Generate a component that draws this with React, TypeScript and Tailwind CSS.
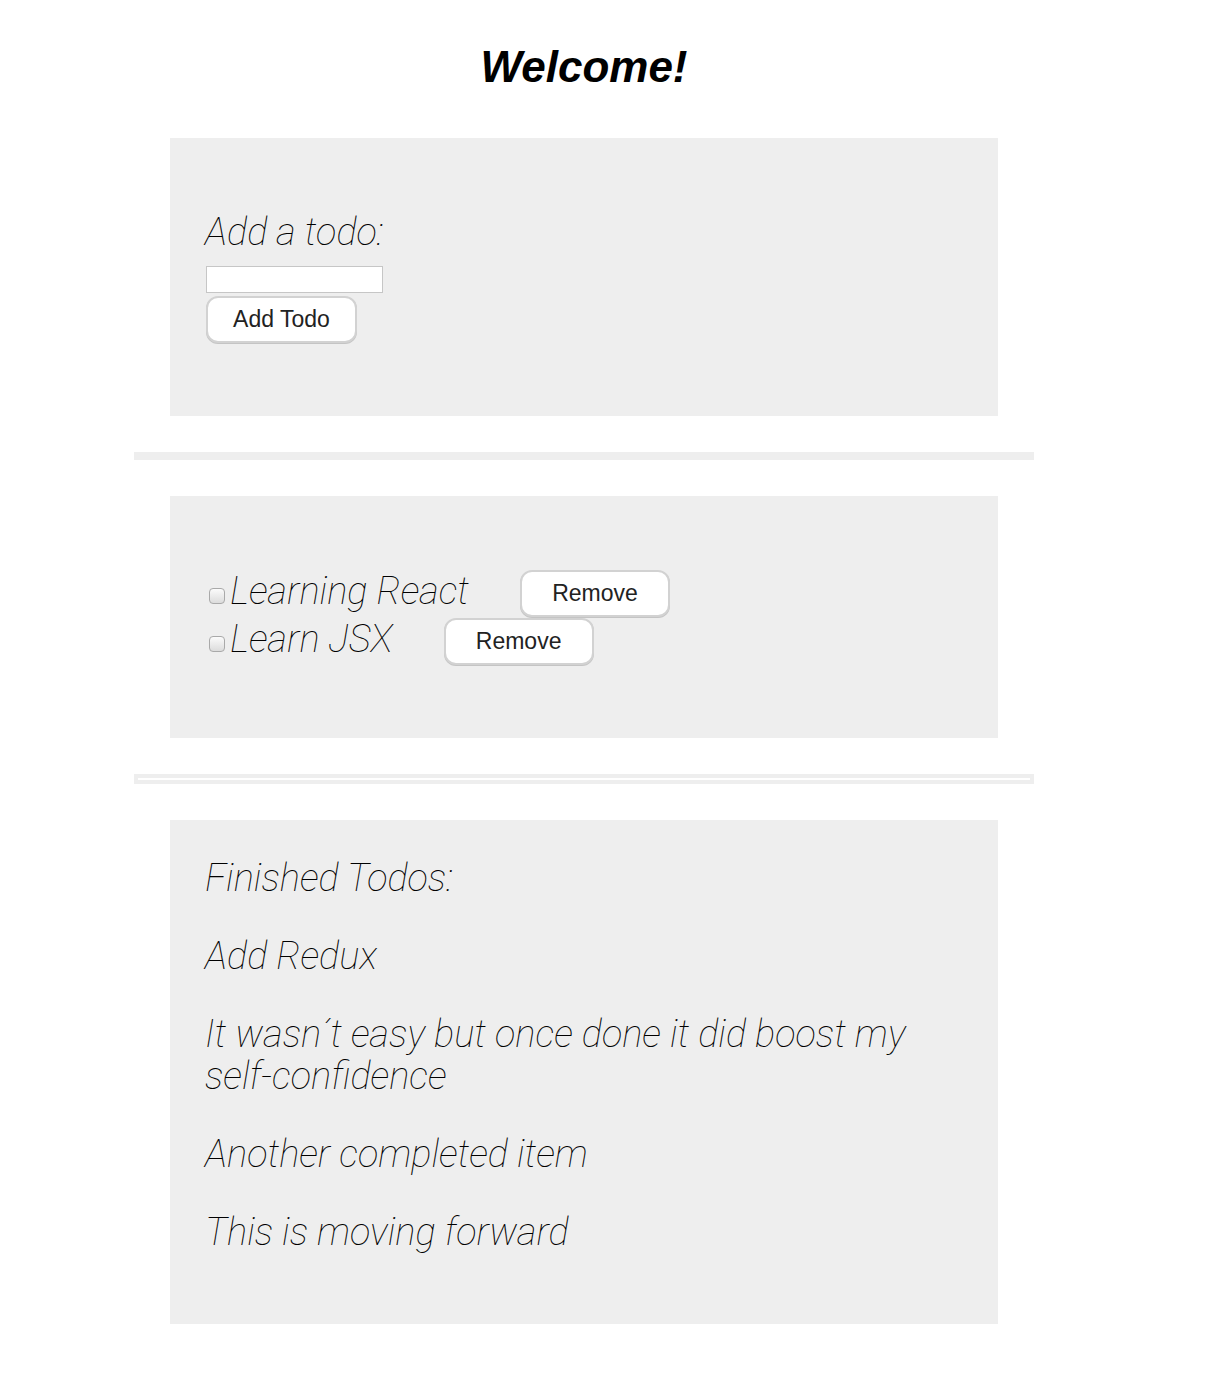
import { FC } from 'react';

const todos = [ 'Learning React', 'Learn JSX' ];

const finished = [
    'Add Redux',
    'It wasn\u00b4t easy but once done it did boost my self-confidence',
    'Another completed item',
    'This is moving forward'
];

const thin = 'font-["Roboto","Helvetica_Neue","Liberation_Sans",sans-serif] font-thin italic text-[38px] leading-[42px] text-black';

const PillButton: FC<{ label: string; className?: string }> = ({ label, className = '' }) =>
{
    return (
        <button className={ `h-[47px] rounded-[12px] border-2 border-[#d2d2d2] bg-white text-[23px] text-[#222] font-["Liberation_Sans",Arial,sans-serif] shadow-[0_1px_0_#c4c4c4] ${ className }` }>
            { label }
        </button>
    );
};

const App: FC<{}> = () =>
{
    return (
        <div className="min-h-[1392px] bg-white pt-[43px]">
            <div className="ml-[134px] w-[900px] flex flex-col">
                <h1 className="h-[48px] leading-[48px] text-center text-[44px] font-bold italic text-black font-['Liberation_Sans',Arial,sans-serif] mb-[47px]">
                    Welcome!
                </h1>

                { /* Add todo form */ }
                <div className="mx-[36px] bg-[#eeeeee] pl-[35px] pt-[73px] pb-[73px] flex flex-col items-start">
                    <p className={ thin }>Add a todo:</p>
                    <input type="text" className="mt-[13px] ml-[1px] w-[177px] h-[27px] bg-white border border-[#c6c6c6] outline-none" />
                    <PillButton label="Add Todo" className="mt-[3px] ml-[1px] w-[151px]" />
                </div>

                <div className="my-[36px] h-[8px] bg-[#eeeeee]" />

                { /* Todo list */ }
                <div className="mx-[36px] bg-[#eeeeee] pl-[39px] pt-[74px] pb-[72px] flex flex-col">
                    { todos.map(todo => (
                        <div key={ todo } className="flex items-end h-[48px]">
                            <input type="checkbox" className="appearance-none w-[16px] h-[16px] mb-[14px] rounded-[4px] border border-[#a9a9a9] bg-gradient-to-b from-[#fbfbfb] to-[#dcdcdc] shrink-0" />
                            <span className={ `${ thin } ml-[5px] mb-[6px] whitespace-nowrap` }>{ todo }</span>
                            <PillButton label="Remove" className="ml-[51px] mb-[1px] w-[150px]" />
                        </div>
                    )) }
                </div>

                <div className="my-[36px] border-4 border-[#eeeeee] h-[10px] bg-white" />

                { /* Finished todos */ }
                <div className="mx-[36px] bg-[#eeeeee] pl-[35px] pr-[35px] pt-[37px] pb-[71px] flex flex-col gap-[36px]">
                    <p className={ thin }>Finished Todos:</p>
                    { finished.map(item => (
                        <p key={ item } className={ thin }>{ item }</p>
                    )) }
                </div>
            </div>
        </div>
    );
};

export default App;
